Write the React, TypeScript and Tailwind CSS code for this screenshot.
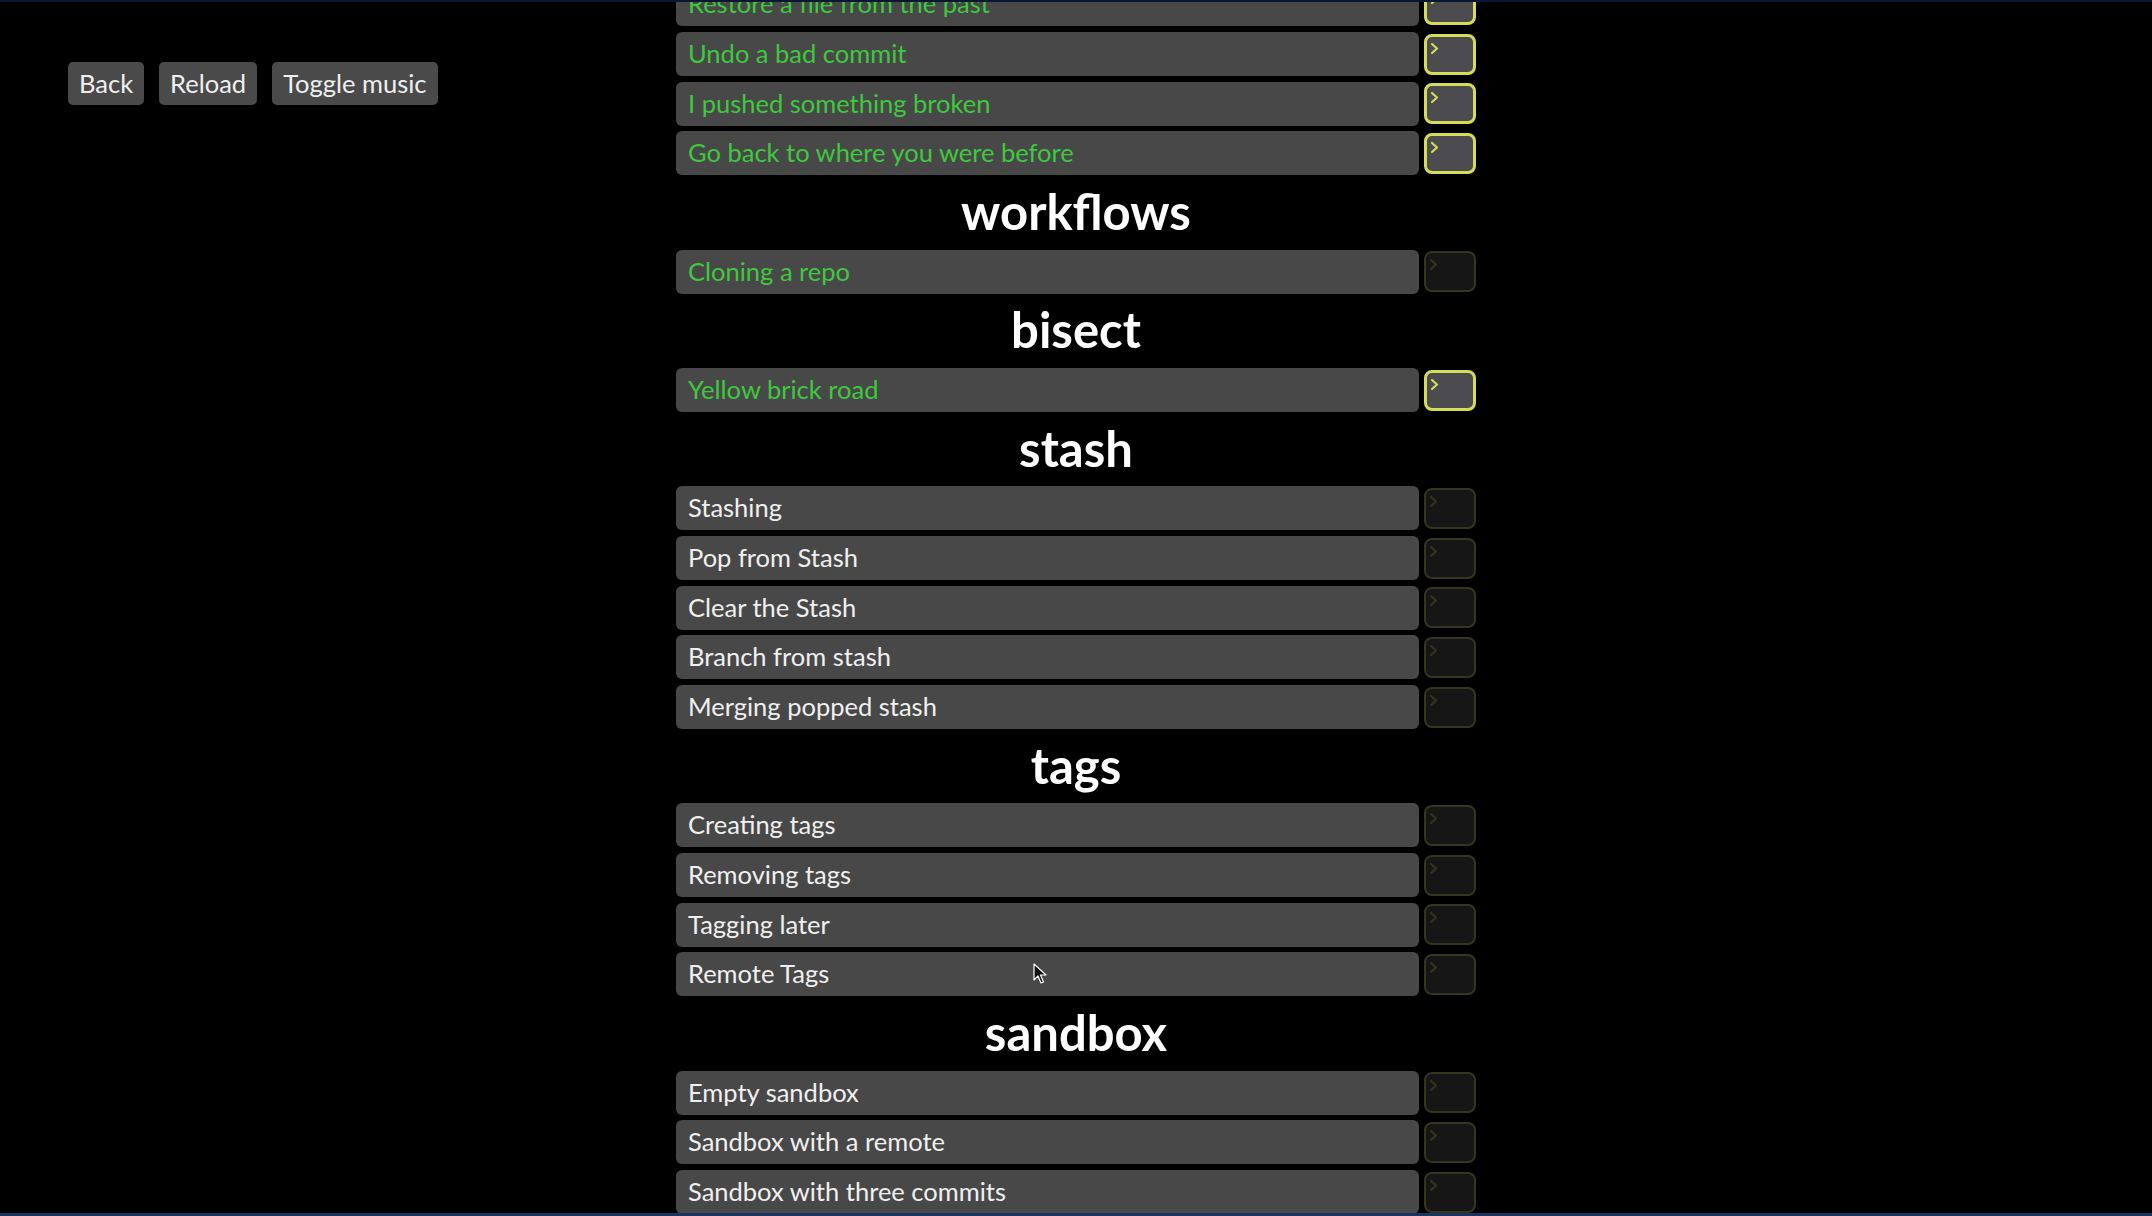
import React from "react";

type Item = { label: string; done?: boolean; active?: boolean };
type Section = { title?: string; items: Item[] };

const sections: Section[] = [
  {
    items: [
      { label: "Restore a file from the past", done: true, active: true },
      { label: "Undo a bad commit", done: true, active: true },
      { label: "I pushed something broken", done: true, active: true },
      { label: "Go back to where you were before", done: true, active: true },
    ],
  },
  { title: "workflows", items: [{ label: "Cloning a repo", done: true }] },
  { title: "bisect", items: [{ label: "Yellow brick road", done: true, active: true }] },
  {
    title: "stash",
    items: [
      { label: "Stashing" },
      { label: "Pop from Stash" },
      { label: "Clear the Stash" },
      { label: "Branch from stash" },
      { label: "Merging popped stash" },
    ],
  },
  {
    title: "tags",
    items: [
      { label: "Creating tags" },
      { label: "Removing tags" },
      { label: "Tagging later" },
      { label: "Remote Tags" },
    ],
  },
  {
    title: "sandbox",
    items: [
      { label: "Empty sandbox" },
      { label: "Sandbox with a remote" },
      { label: "Sandbox with three commits" },
    ],
  },
];

function PlayButton({ active }: { active?: boolean }) {
  return (
    <div
      className={
        active
          ? "relative w-[52px] h-[41px] shrink-0 rounded-[8px] border-[3px] border-[#d5dc58] bg-[#4b4b50]"
          : "relative w-[52px] h-[41px] shrink-0 rounded-[8px] border-[2px] border-[#36361f] bg-[#161616]"
      }
    >
      <svg className="absolute left-0 top-0" width="46" height="35" viewBox="0 0 46 35">
        <path
          d="M5 7 L10 11.5 L5 16"
          fill="none"
          stroke={active ? "#d5dc58" : "#34341f"}
          strokeWidth="2.2"
          strokeLinecap="round"
          strokeLinejoin="round"
        />
      </svg>
    </div>
  );
}

function Row({ item }: { item: Item }) {
  return (
    <div className="flex items-center gap-[5px] mb-[5.7px]">
      <div
        className={
          "w-[743px] h-[44px] rounded-[6px] bg-[#484848] pl-[12px] text-[25.5px] leading-[42px] whitespace-nowrap overflow-hidden " +
          (item.done ? "text-[#3ec93e]" : "text-[#f0f0f0]")
        }
      >
        {item.label}
      </div>
      <PlayButton active={item.active} />
    </div>
  );
}

export default function App() {
  return (
    <div
      className="relative h-[1216px] w-full overflow-hidden bg-black border-t-[2px] border-t-[#0a1733] border-b-[3px] border-b-[#1b3562]"
      style={{ fontFamily: "Lato, 'Open Sans', sans-serif" }}
    >
      <div className="grid grid-cols-[1fr_800px_1fr]">
        <div className="pl-[68px] pt-[60px]">
          <div className="flex gap-[15px]">
            {["Back", "Reload", "Toggle music"].map((b) => (
              <div
                key={b}
                className="h-[43px] rounded-[5px] bg-[#4a4a4a] px-[11px] text-[25.5px] leading-[43px] text-[#f0f0f0] whitespace-nowrap"
              >
                {b}
              </div>
            ))}
          </div>
        </div>
        <div className="mt-[-19.6px] flex flex-col">
          {sections.map((s, i) => (
            <div key={i}>
              {s.title && (
                <div className="h-[68.6px] text-center text-[49px] font-bold leading-[61px] text-white">
                  {s.title}
                </div>
              )}
              {s.items.map((it) => (
                <Row key={it.label} item={it} />
              ))}
            </div>
          ))}
        </div>
        <div />
      </div>
      <svg
        className="absolute left-[1033px] top-[961px]"
        width="16"
        height="22"
        viewBox="0 0 16 22"
      >
        <path
          d="M1 1 L1 17 L5 13 L8 20 L10.5 19 L7.5 12 L13 12 Z"
          fill="#111"
          stroke="#fff"
          strokeWidth="1.2"
          strokeLinejoin="round"
        />
      </svg>
    </div>
  );
}
